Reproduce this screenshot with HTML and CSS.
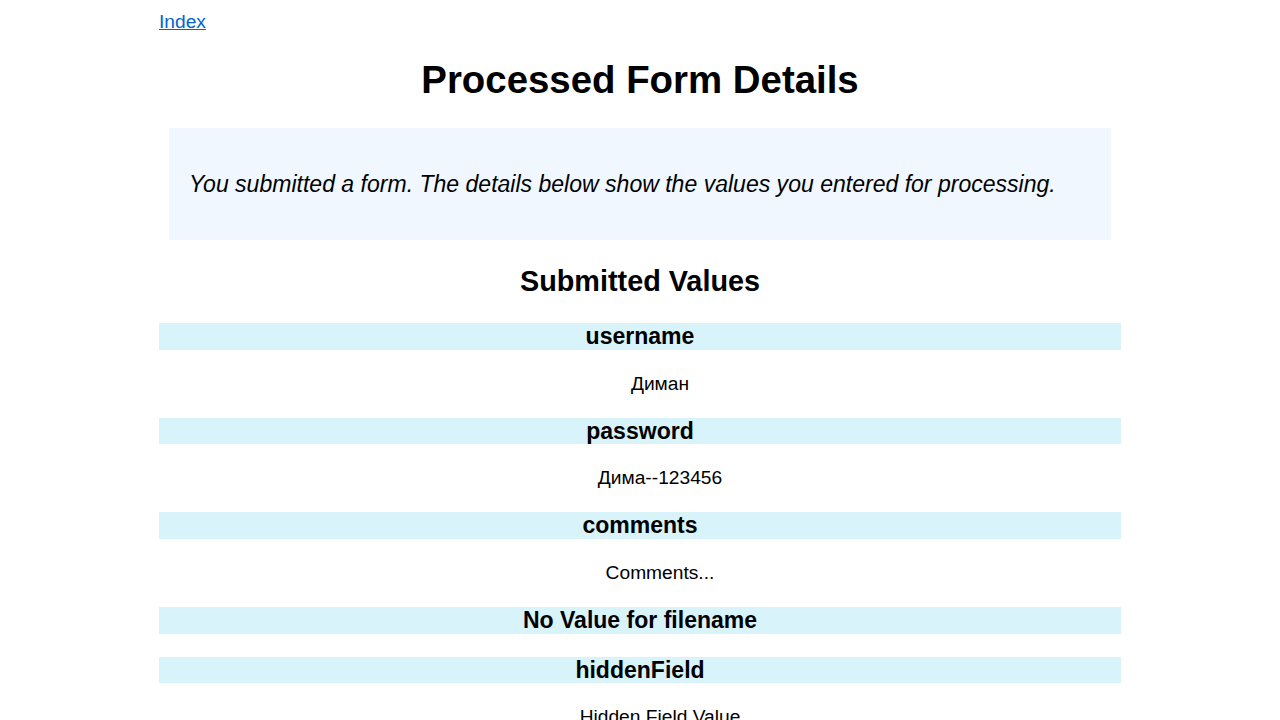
FILE: index.html
```html
<!DOCTYPE html>
<html lang="en">
<head>
<meta charset="utf-8">
<title>Processed Form Details</title>
<link rel="stylesheet" href="styles.css">
</head>
<body>
<div class="page">
  <div class="nav"><a href="#">Index</a></div>
  <h1 class="title">Processed Form Details</h1>
  <div class="explanation">
    <p>You submitted a form. The details below show the values you entered for processing.</p>
  </div>
  <h2 class="subtitle">Submitted Values</h2>
  <div class="values">
    <h3 class="field">username</h3>
    <p class="value">Диман</p>
    <h3 class="field">password</h3>
    <p class="value">Дима--123456</p>
    <h3 class="field">comments</h3>
    <p class="value">Comments...</p>
    <h3 class="field">No Value for filename</h3>
    <h3 class="field">hiddenField</h3>
    <p class="value">Hidden Field Value</p>
  </div>
</div>
</body>
</html>
```
FILE: styles.css
```css
html, body {
  margin: 0;
  padding: 0;
  background: #ffffff;
}
body {
  font-family: "Liberation Sans", Arial, sans-serif;
  font-size: 19.2px;
  line-height: 1.149;
  color: #000000;
}
.page {
  max-width: 962px;
  margin: 0 auto;
  padding-top: 11px;
}
.nav a {
  color: #0066cc;
}
.title {
  font-size: 2em;
  text-align: center;
  margin: 24.7px 0 25.7px;
}
.explanation {
  background: #f0f7fe;
  margin: 0 10px;
  padding: 20px;
}
.explanation p {
  font-style: italic;
  font-size: 1.2em;
  margin: 1em 0;
}
.subtitle {
  font-size: 1.5em;
  text-align: center;
  margin: 0.87em 0;
}
.field {
  background: #d9f3fa;
  font-size: 1.2em;
  text-align: center;
  margin: 1em 0;
}
.value {
  text-align: center;
  margin: 1em 0 1em 40px;
}
```
